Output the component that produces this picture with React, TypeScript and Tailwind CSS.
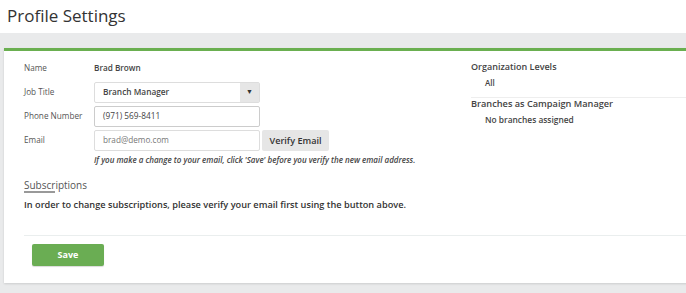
import React from "react";

const font = { fontFamily: '"Open Sans", "Liberation Sans", sans-serif' };

const App = () => {
    return (
        <div className="min-h-[293px] w-[686px] overflow-hidden bg-[#e9eaeb] text-[#444]" style={font}>
            <div className="h-[33px] bg-white pl-[7px] pt-[4px] text-[17px] leading-[24px] text-[#333]">Profile Settings</div>

            <div className="ml-[4px] mt-[15px] w-[700px] border-t-[3px] border-[#6aaf50] bg-white pb-[17px] shadow-[0_1px_2px_rgba(0,0,0,0.12)]">
                <div className="flex">
                    <div className="w-[467px] pl-[20px] pt-[7px]">
                        <div className="flex h-[20px] items-center text-[8.2px]">
                            <div className="w-[70px] text-[#555]">Name</div>
                            <div className="font-semibold text-[#444]">Brad Brown</div>
                        </div>
                        <div className="mt-[4px] flex h-[21px] items-center text-[8.2px]">
                            <div className="w-[70px] text-[#555]">Job Title</div>
                            <div className="flex h-[21px] w-[166px] items-center rounded-[2px] border border-[#ddd] bg-white">
                                <div className="flex-1 pl-[8px] text-[8.3px] font-semibold text-[#444]">Branch Manager</div>
                                <div className="flex h-full w-[19px] items-center justify-center bg-[#e6e6e6] text-[7px] text-[#333]">▼</div>
                            </div>
                        </div>
                        <div className="mt-[3px] flex h-[21px] items-center text-[8.2px]">
                            <div className="w-[70px] text-[#555]">Phone Number</div>
                            <div className="flex h-[21px] w-[166px] items-center rounded-[2px] border border-[#ccc] bg-white pl-[8px] text-[8.3px] text-[#444]">(971) 569-8411</div>
                        </div>
                        <div className="mt-[3px] flex h-[21px] items-center text-[8.2px]">
                            <div className="w-[70px] text-[#555]">Email</div>
                            <div className="flex h-[21px] w-[166px] items-center rounded-[2px] border border-[#ddd] bg-white pl-[8px] text-[8.2px] text-[#777]">brad@demo.com</div>
                            <div className="ml-[2px] flex h-[21px] w-[67px] items-center justify-center rounded-[2px] bg-[#e6e6e6] text-[9.1px] font-semibold text-[#333]">Verify Email</div>
                        </div>
                        <div className="mt-[2px] pl-[70px] text-[8px] font-semibold italic leading-[14px] text-[#444]">
                            If you make a change to your email, click 'Save' before you verify the new email address.
                        </div>
                        <div className="relative mt-[11px] h-[14px] text-[10px] leading-[14px] text-[#555]">
                            Subscriptions
                            <div className="absolute bottom-[-1px] left-0 h-[2px] w-[31px] bg-[#999]" />
                        </div>
                        <div className="mt-[6px] text-[9.2px] font-semibold leading-[14px] text-[#333]">
                            In order to change subscriptions, please verify your email first using the button above.
                        </div>
                    </div>
                    <div className="flex-1 pt-[9px]">
                        <div className="text-[9px] font-semibold leading-[14px] text-[#444]">Organization Levels</div>
                        <div className="mt-[3px] pl-[14px] text-[8px] font-semibold leading-[12px] text-[#444]">All</div>
                        <div className="mt-[8px] border-t border-[#eee] text-[9.2px] font-semibold leading-[11px] text-[#444]">
                            Branches as Campaign Manager
                        </div>
                        <div className="mt-[5px] pl-[14px] text-[8.4px] font-semibold leading-[12px] text-[#444]">No branches assigned</div>
                    </div>
                </div>

                <div className="ml-[20px] mt-[23px] border-t border-[#eaeeee] pl-[8px] pt-[8px]">
                    <div className="flex h-[22px] w-[72px] items-center justify-center rounded-[2px] bg-[#6aad53] text-[9px] font-bold text-white shadow-[0_1px_1px_rgba(0,0,0,0.15)]">
                        Save
                    </div>
                </div>
            </div>
        </div>
    );
};

export default App;
